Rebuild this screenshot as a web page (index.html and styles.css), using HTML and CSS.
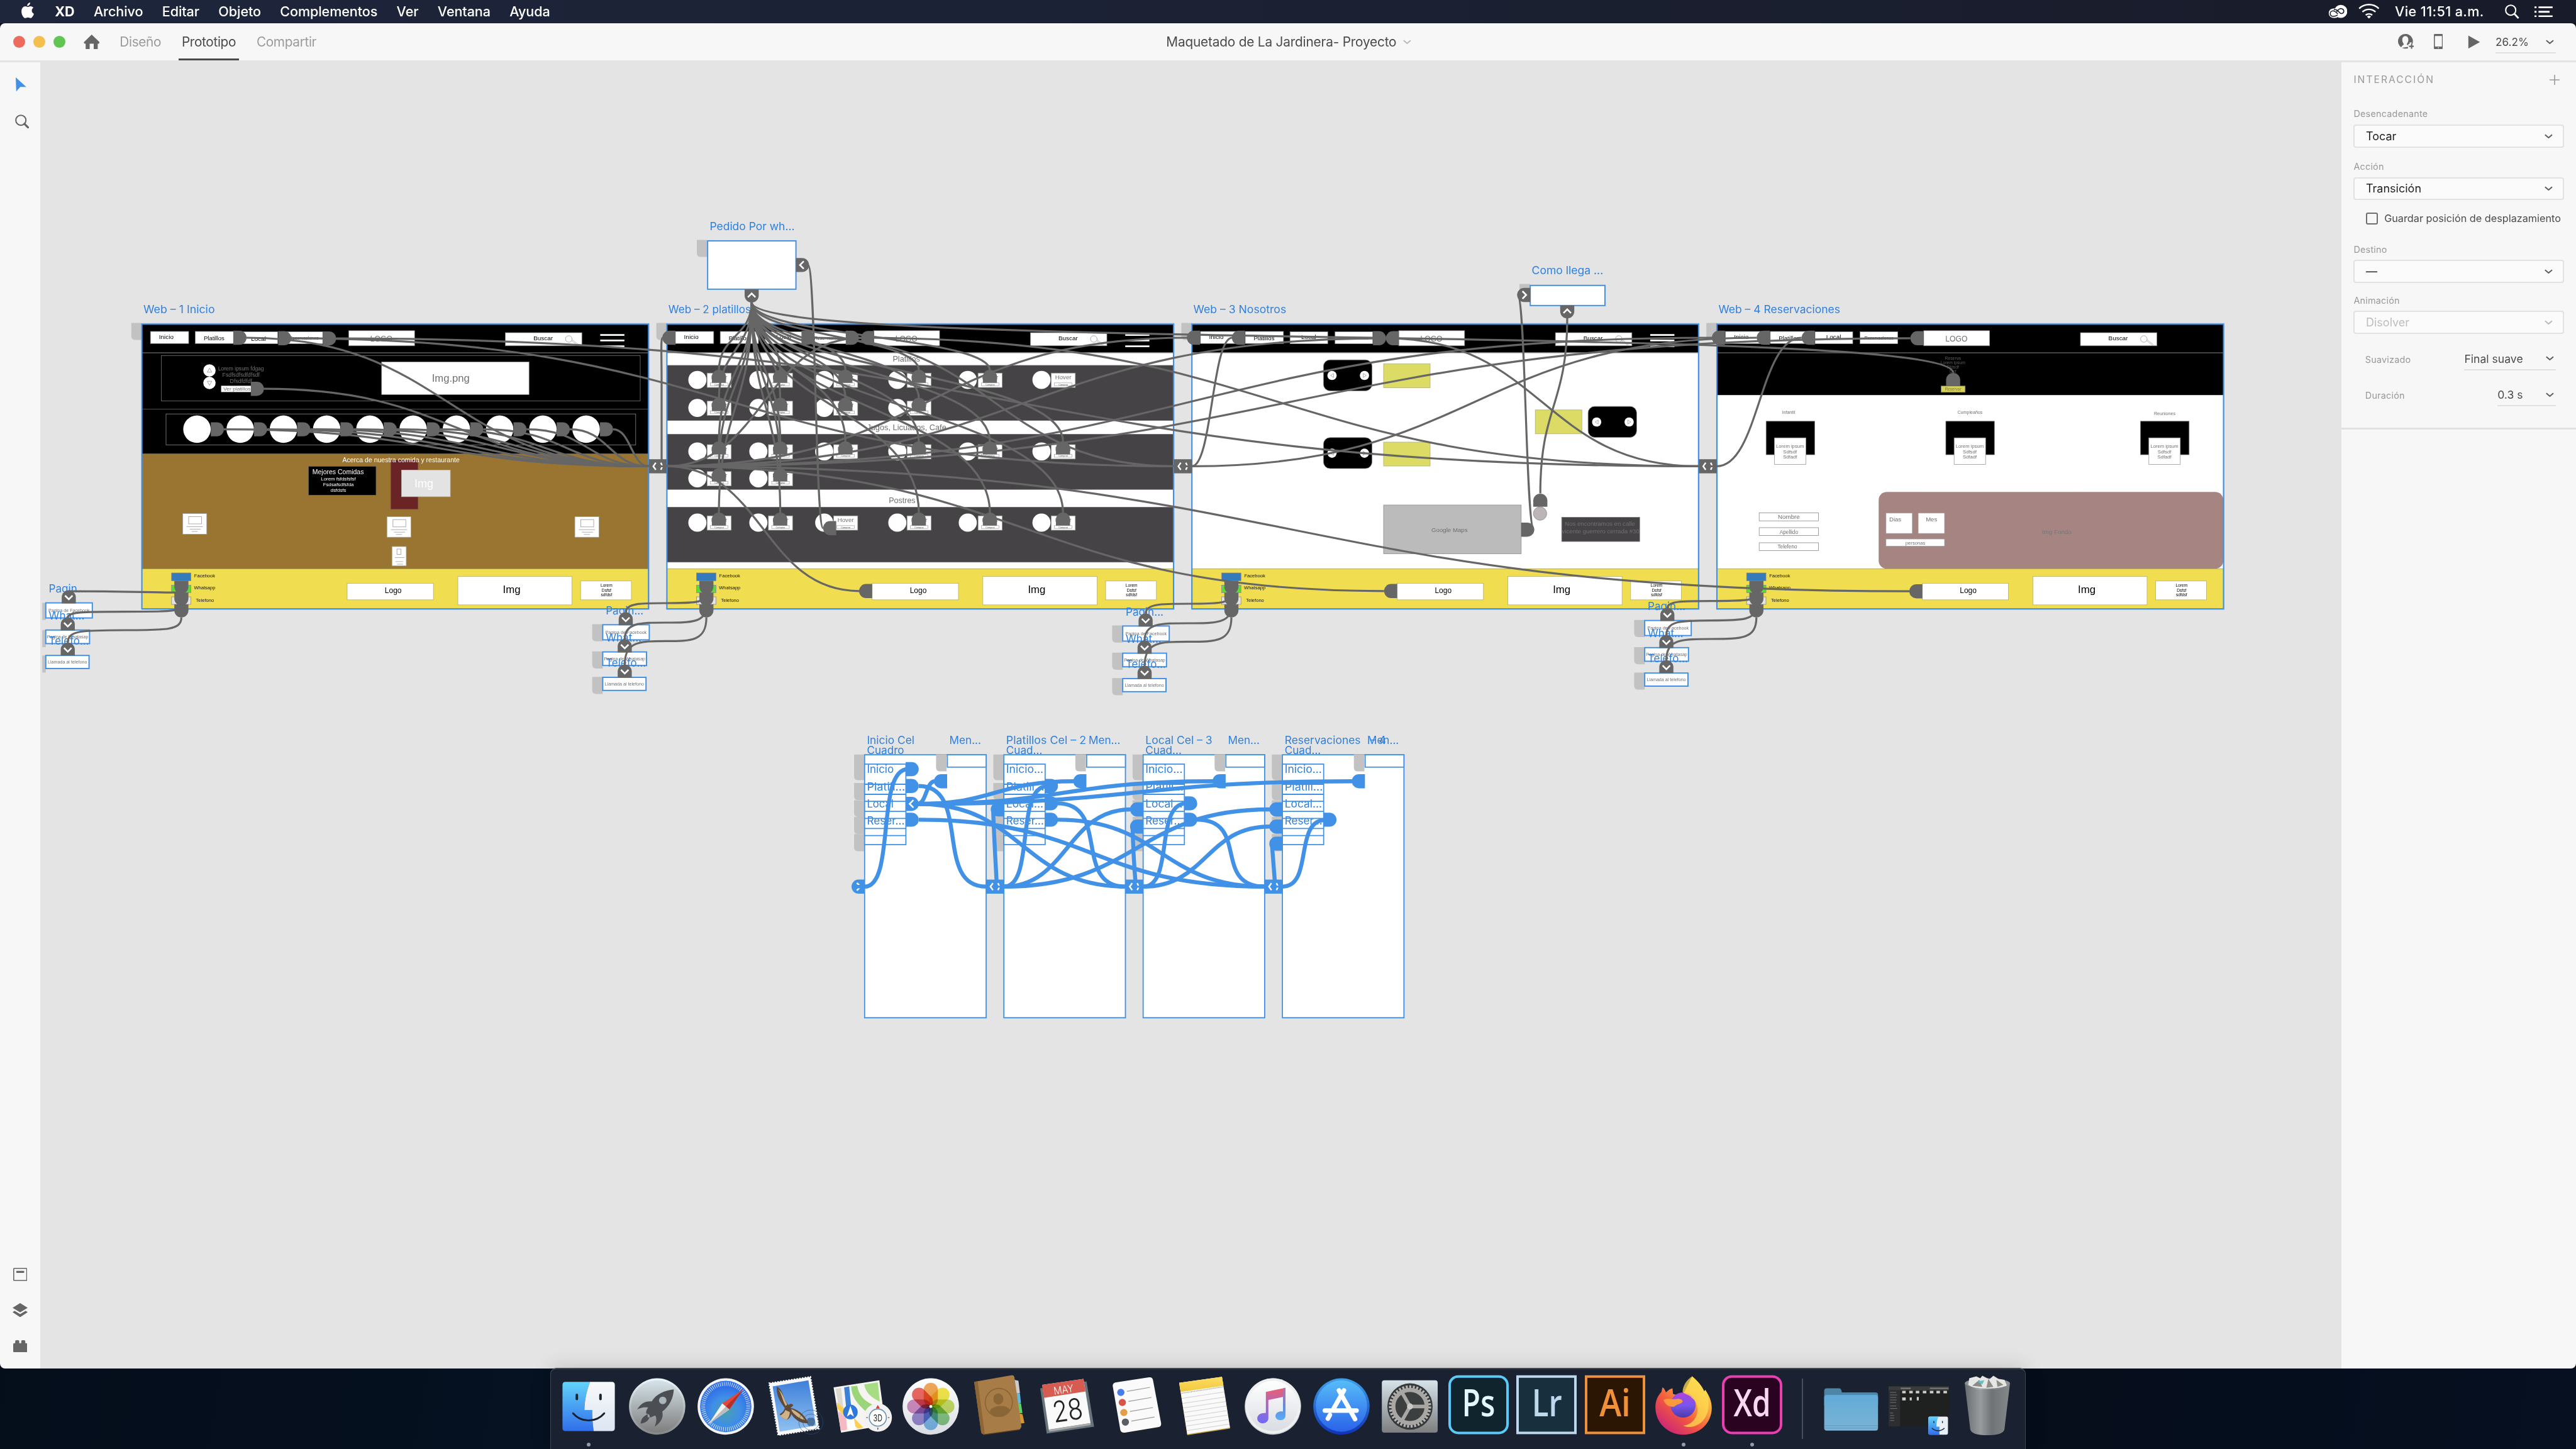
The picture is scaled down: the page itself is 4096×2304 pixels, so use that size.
FILE: index.html
```html
<!DOCTYPE html>
<html lang="es">
<head>
<meta charset="utf-8">
<title>Maquetado de La Jardinera- Proyecto</title>
<link rel="stylesheet" href="styles.css">
</head>
<body>
<header class="menubar">
  <svg class="apple" viewBox="0 0 25 32"><path d="M17.4 0c.3 3.400-2.600 7-5.900 7C11.200 3.800 14.200.5 17.400 0zM12.700 8.900c1.400 0 3-1.500 5.600-1.500 2.300 0 4.400 1.200 5.700 3-5 3-4 9.900.9 12C23.700 26.300 20.800 31 18.200 31c-2 0-2.700-1.200-5.200-1.200S9.700 31 7.900 31C4.400 31 .2 24.300.2 17.700.2 11.200 4.200 7.600 8 7.600c2 0 3.700 1.300 4.700 1.300z"/></svg>
  <nav class="menus"><b>XD</b><span>Archivo</span><span>Editar</span><span>Objeto</span><span>Complementos</span><span>Ver</span><span>Ventana</span><span>Ayuda</span></nav>
  <div class="status">
    <svg class="cc" viewBox="0 0 38 28"><rect x="1" y="8" width="22" height="19" rx="9.500" fill="#fff"/><circle cx="25" cy="14" r="13" fill="#fff"/><g fill="none" stroke="#1a1e2d" stroke-width="2" stroke-linecap="round"><path d="M18 21.500c-3 2-6 2.500-8.500 2.300a5.500 5.500 0 0 1 0-11c3 0 5 1.500 9 5.500"/><path d="M12 10.500c4-1 7 2 11 6 3 3 8 1.500 8-3s-6-7-10-3.500l-4 4"/></g></svg>
    <svg class="wifi" viewBox="0 0 42 30"><g fill="none" stroke="#fff" stroke-width="3"><path d="M1.500 9.500a28 28 0 0 1 39 0M8 16.200a19 19 0 0 1 26 0M14.500 22.500a10 10 0 0 1 13 0"/></g><path d="M17 25.500a6 6 0 0 1 8 0L21 29.500z" fill="#fff"/></svg>
    <span class="clock">Vie 11:51 a.m.</span>
    <svg class="spot" viewBox="0 0 28 29"><circle cx="11.500" cy="11.500" r="10" fill="none" stroke="#fff" stroke-width="2.600"/><path d="M18.500 18.500l8.500 9" stroke="#fff" stroke-width="3.400"/></svg>
    <svg class="list" viewBox="0 0 36 22"><path d="M0 2h4M0 11h4M0 20h4M8 2h28M8 11h22M8 20h28" stroke="#fff" stroke-width="3.600"/></svg>
  </div>
</header>

<main class="window">
  <div class="titlebar">
    <div class="lights"><i class="red"></i><i class="amber"></i><i class="green"></i></div>
    <svg class="home" viewBox="0 0 32 29"><path d="M16 0l16 15.500-2 2.500h-2v11h-8V18h-8v11H4V18H2l-2-2.500z" fill="#666"/></svg>
    <nav class="tabs"><span>Diseño</span><span class="on">Prototipo</span><span>Compartir</span></nav>
    <div class="doc"><span>Maquetado de La Jardinera- Proyecto</span><svg class="chev" viewBox="0 0 16 9"><path d="M1 1.500l7 6 7-6"/></svg></div>
    <div class="actions">
      <svg class="share" viewBox="0 0 32 30"><path d="M14.500 0a14.500 14.500 0 0 0-8 26.600c1-3.600 4-4.600 5-5.600 0-2-3-4-3-9.500C8.500 7 11 4.500 14.500 4.500s6 2.500 6 7c0 5.500-3 7-3 9.500 1 .6 2 1 3 2v-3h2.500v-3h4v3h1.500A14.500 14.500 0 0 0 14.500 0zM8 27.400c3 2 9 2.300 12 .6l-.5-2.500z" fill="#666"/><path d="M27 19.500v10M22 24.500h10" stroke="#666" stroke-width="2.600"/></svg>
      <svg class="device" viewBox="0 0 18 30"><path fill-rule="evenodd" d="M2 0h14a2 2 0 0 1 2 2v26a2 2 0 0 1-2 2H2a2 2 0 0 1-2-2V2a2 2 0 0 1 2-2zM2 4v21h14V4zM8 26.500v1.600h2v-1.600z" fill="#666"/></svg>
      <svg class="play" viewBox="0 0 24 27"><path d="M1 .5l23 13-23 13z" fill="#666"/></svg>
      <div class="zoom"><span>26.2%</span><svg class="chev dark" viewBox="0 0 16 9"><path d="M1 1.500l7 6 7-6"/></svg></div>
    </div>
  </div>

  <div class="body">
    <aside class="tools">
      <svg class="cursor" viewBox="0 0 21 28"><path d="M0 0l21 19H9L1 28z" fill="#4191e6"/></svg>
      <svg class="lens" viewBox="0 0 28 28"><circle cx="11.500" cy="11.500" r="10" fill="none" stroke="#666" stroke-width="2.600"/><path d="M18.500 18.500l7.500 7.500" stroke="#666" stroke-width="4" stroke-linecap="round"/></svg>
      <span class="push"></span>
      <svg class="boards" viewBox="0 0 28 26"><rect x="1" y="1" width="26" height="24" rx="1" fill="none" stroke="#666" stroke-width="2"/><rect x="6" y="6" width="16" height="4" rx="1.500" fill="#666"/></svg>
      <svg class="layers" viewBox="0 0 30 28"><path d="M15 0l15 9.300-15 9.300L0 9.300zM0 18l4-2.700 11 6.700 11-6.700 4 2.700-15 10z" fill="#666"/></svg>
      <svg class="plugins" viewBox="0 0 28 24"><path d="M4 6V2q0-2 2-2h4q2 0 2 2v4h4V2q0-2 2-2h4q2 0 2 2v4h2q2 0 2 2v14q0 2-2 2H2q-2 0-2-2V8q0-2 2-2z" fill="#666"/></svg>
    </aside>

    <svg class="canvas" id="canvas" viewBox="80 124 4574 2596" preserveAspectRatio="xMinYMin meet"></svg>

    <aside class="panel">
      <div class="head"><span>INTERACCIÓN</span><svg viewBox="0 0 20 20"><path d="M10 0v20M0 10h20" stroke="#999" stroke-width="2"/></svg></div>
      <label class="l1">Desencadenante</label>
      <div class="select"><span>Tocar</span><svg class="chev dark" viewBox="0 0 16 9"><path d="M1 1.500l7 6 7-6"/></svg></div>
      <label class="l2">Acción</label>
      <div class="select"><span>Transición</span><svg class="chev dark" viewBox="0 0 16 9"><path d="M1 1.500l7 6 7-6"/></svg></div>
      <div class="check"><i></i><span>Guardar posición de desplazamiento</span></div>
      <label class="l3">Destino</label>
      <div class="select"><span>—</span><svg class="chev dark" viewBox="0 0 16 9"><path d="M1 1.500l7 6 7-6"/></svg></div>
      <label class="l4">Animación</label>
      <div class="select off"><span>Disolver</span><svg class="chev" viewBox="0 0 16 9"><path d="M1 1.500l7 6 7-6"/></svg></div>
      <div class="row r1"><em>Suavizado</em><div class="pick wide"><span>Final suave</span><svg class="chev dark" viewBox="0 0 16 9"><path d="M1 1.500l7 6 7-6"/></svg></div></div>
      <div class="row r2"><em>Duración</em><div class="pick"><span>0.3 s</span><svg class="chev dark" viewBox="0 0 16 9"><path d="M1 1.500l7 6 7-6"/></svg></div></div>
      <div class="rule"></div>
    </aside>
  </div>
</main>

<footer class="dock">
  <svg width="0" height="0" class="defs">
    <defs>
      <linearGradient id="fblue" x2="0" y2="1"><stop offset="0" stop-color="#62d3fb"/><stop offset="1" stop-color="#306eea"/></linearGradient>
      <linearGradient id="fwhite" x2="0" y2="1"><stop offset="0" stop-color="#f8f9fa"/><stop offset="1" stop-color="#dce6f2"/></linearGradient>
      <linearGradient id="steel" x2="0" y2="1"><stop offset="0" stop-color="#d5e3e9"/><stop offset="1" stop-color="#7e7e7e"/></linearGradient>
      <linearGradient id="steelrim" x2="0" y2="1"><stop offset="0" stop-color="#eaf8fd"/><stop offset="1" stop-color="#858789"/></linearGradient>
      <radialGradient id="saf" cy=".6"><stop offset="0" stop-color="#4b9fae"/><stop offset=".55" stop-color="#3f8fe6"/><stop offset="1" stop-color="#2f6ee8"/></radialGradient>
      <linearGradient id="sky" x2="0" y2="1"><stop offset="0" stop-color="#3f7fda"/><stop offset="1" stop-color="#8fc1f1"/></linearGradient>
      <linearGradient id="disc" x2="0" y2="1"><stop offset="0" stop-color="#fff"/><stop offset="1" stop-color="#d9dce2"/></linearGradient>
      <linearGradient id="note" x2="0" y2="1"><stop offset="0" stop-color="#ed5f6c"/><stop offset=".5" stop-color="#a766c9"/><stop offset="1" stop-color="#6d6cf5"/></linearGradient>
      <linearGradient id="note2" x2="0" y2="1"><stop offset="0" stop-color="#c96a9d"/><stop offset=".6" stop-color="#5f8fe0"/><stop offset="1" stop-color="#58aef5"/></linearGradient>
      <linearGradient id="store" x2="0" y2="1"><stop offset="0" stop-color="#57bcf8"/><stop offset="1" stop-color="#2a63ea"/></linearGradient>
      <linearGradient id="storerim" x2="0" y2="1"><stop offset="0" stop-color="#3f9fe8"/><stop offset="1" stop-color="#0f34b8"/></linearGradient>
      <linearGradient id="fox" x1="1" y1="0" x2=".2" y2="1"><stop offset="0" stop-color="#fff36b"/><stop offset=".35" stop-color="#fbb03f"/><stop offset=".65" stop-color="#f2583f"/><stop offset="1" stop-color="#c9207c"/></linearGradient>
      <linearGradient id="globe" x2="0" y2="1"><stop offset="0" stop-color="#b043dc"/><stop offset=".5" stop-color="#7a55ee"/><stop offset="1" stop-color="#4a3ca8"/></linearGradient>
      <linearGradient id="fold" x2="0" y2="1"><stop offset="0" stop-color="#62abd8"/><stop offset="1" stop-color="#7ab3d5"/></linearGradient>
      <linearGradient id="bin"><stop offset="0" stop-color="#6d7174"/><stop offset=".35" stop-color="#a0a3a5"/><stop offset=".6" stop-color="#74787a"/><stop offset="1" stop-color="#8b8f91"/></linearGradient>
      <linearGradient id="yel" x2="0" y2="1"><stop offset="0" stop-color="#fbdc62"/><stop offset="1" stop-color="#f3c83c"/></linearGradient>
    </defs>
  </svg>

  <div class="app run"><svg viewBox="0 0 120 120"><path d="M14 14h48.500C55 35 52 52 51.600 70H67c0 14 1 28 3 42H14q-6 0-6-6V20q0-6 6-6z" fill="url(#fblue)"/><path d="M62.500 14H106q6 0 6 6v86q0 6-6 6H70c-2-14-3-28-3-42H51.600C52 52 55 35 62.500 14z" fill="url(#fwhite)"/><path d="M36.500 40v8M83.500 40v8" stroke="#16242f" stroke-width="5" stroke-linecap="round"/><path d="M29 76.500c16 19 46 19 62 0" fill="none" stroke="#1a2029" stroke-width="3.600" stroke-linecap="round"/></svg></div>
  <div class="app"><svg viewBox="0 0 120 120"><circle cx="60" cy="63" r="56" fill="url(#steelrim)"/><circle cx="60" cy="63" r="52" fill="url(#steel)"/><path d="M93 29C75 31 58 38 49 53c-14-1-22 5-29 16 8-4 14-5 22-4-4 5-4 9-4 12l6 2 2 6 10-4c4 6 2 14-1 22 12-8 18-18 15-30 14-10 22-26 23-44z" fill="#4b4f53"/><circle cx="71" cy="51" r="7.500" fill="#a9b5bb"/><path d="M41 78c-9 5-13 9-14 19 9-1 15-5 18-13l-4 1z" fill="#4b4f53"/></svg></div>
  <div class="app"><svg viewBox="0 0 120 120"><circle cx="60" cy="63" r="56" fill="#f1f3f5"/><circle cx="60" cy="63" r="51" fill="url(#saf)"/><circle cx="60" cy="63" r="45" fill="none" stroke="#dcecfb" stroke-width="8" stroke-dasharray="1.200 2.727"/><path d="M94.700 28.700L53 57l14 12z" fill="#e3483e"/><path d="M94.700 28.700L60 63l7 6z" fill="#b82f28"/><path d="M25.800 98L53 57l14 12z" fill="#f4f4f4"/><path d="M25.800 98L60 63l7 6z" fill="#bcbcbc"/></svg></div>
  <div class="app"><svg viewBox="0 0 120 120"><path d="M10 17L92 4l17 103-81 13z" fill="#f7f7f7" stroke="#f7f7f7" stroke-width="3" stroke-dasharray="3 2.500"/><path d="M17 23l71-12 15 90-72 12z" fill="url(#sky)"/><path d="M25 24c6 0 11 10 14 20 3 8 6 13 10 16 2-3 6-3 9 0-2 3-4 5-6 6 14 2 28 12 36 30-14 2-26-6-34-18-1 5-4 9-8 11-7-1-12-5-15-11 6-3 9-7 10-12C32 54 24 42 25 24z" fill="#5f4a38"/><path d="M28 29c7 8 8 22 15 33l3-3C40 50 38 36 28 29zM54 68c9 4 19 10 27 22-10-2-20-9-26-18zM42 70c-2 6-6 9-10 11 3 4 7 7 13 8 4-4 6-9 6-15z" fill="#cfb28a"/><g fill="none" stroke="#33527c" opacity=".75"><circle cx="93" cy="94" r="24"/><circle cx="93" cy="94" r="16"/></g><path d="M93 86c4-2 8 1 8 7s-4 11-8 8c-4 3-8-2-8-8s4-9 8-7z" fill="#33527c" opacity=".7"/></svg></div>
  <div class="app"><svg viewBox="0 0 120 120"><path d="M3 25L94 11l12 89-88 15z" fill="#f5f4f0"/><path d="M7 28l11-2 9 84-5 1z" fill="#dcdad0"/><path d="M38 23l12-1c3 18 14 30 28 36l22 12 2 25-14 2C76 72 40 62 38 23z" fill="#9ad57a"/><path d="M64 19l27-4 4 38C78 46 66 34 64 19z" fill="#a6dc84"/><path d="M10 55l22 18 30 32-11 2-41-40z" fill="#fccf52"/><path d="M12 72l16 14 2 23-13 2z" fill="#f4b9c3"/><path d="M24 25l10-2 6 60-10 1z" fill="#3c82d8"/><path d="M31 84l12-1 4 24-14 3z" fill="#fff"/><circle cx="36.500" cy="74" r="14.500" fill="#2e78dc"/><path d="M36.500 62l7 21-7-5-7 5z" fill="#fff"/><circle cx="91" cy="85" r="28" fill="#f2f2f2"/><circle cx="91" cy="85" r="17" fill="#fff" stroke="#6f93ad" stroke-width="2"/><text x="91" y="92" class="t3d" textLength="18" lengthAdjust="spacingAndGlyphs">3D</text><path d="M91 60l4 7h-8z" fill="#e0392f"/><path d="M68 85h3M111 85h3M91 105v4" stroke="#333" stroke-width="1.500"/></svg></div>
  <div class="app"><svg viewBox="0 0 120 120"><circle cx="60" cy="63" r="56" fill="url(#disc)"/><g class="petals"><rect x="46" y="16" width="28" height="47" rx="14" fill="#f2a14a"/><rect x="46" y="16" width="28" height="47" rx="14" fill="#f3e53c" transform="rotate(45 60 63)"/><rect x="46" y="16" width="28" height="47" rx="14" fill="#c3dc5a" transform="rotate(90 60 63)"/><rect x="46" y="16" width="28" height="47" rx="14" fill="#7fc57c" transform="rotate(135 60 63)"/><rect x="46" y="16" width="28" height="47" rx="14" fill="#76b8ec" transform="rotate(180 60 63)"/><rect x="46" y="16" width="28" height="47" rx="14" fill="#9583cf" transform="rotate(225 60 63)"/><rect x="46" y="16" width="28" height="47" rx="14" fill="#cf87bd" transform="rotate(270 60 63)"/><rect x="46" y="16" width="28" height="47" rx="14" fill="#ee5d55" transform="rotate(315 60 63)"/></g><circle cx="60" cy="63" r="3" fill="#fff"/></svg></div>
  <div class="app"><svg viewBox="0 0 120 120"><path d="M90 10l8 2 3 24-8 2z" fill="#ccc"/><path d="M94 36l7 1 2 19-7 1z" fill="#63b9e0"/><path d="M96 56l7 1 3 19-8 1z" fill="#62cf68"/><path d="M99 77l7 1 4 18-8 1z" fill="#d8962f"/><path d="M28 120l72-10 4-8-4-4-72 14z" fill="#5d3d1d"/><path d="M10 14L84 1q5-1 6 4l14 98-3 5-72 10q-4 0-5-4z" fill="#a87c46"/><path d="M10 14l7-1 14 104-3 1-4-3z" fill="#8e6636"/><ellipse cx="59" cy="55" rx="27" ry="28" fill="none" stroke="#8a6535" stroke-width="2"/><ellipse cx="58" cy="48" rx="10" ry="11" fill="#8a6535"/><path d="M41 73c2-12 32-16 40-4-8 17-32 18-40 4z" fill="#8a6535"/></svg></div>
  <div class="app"><svg viewBox="0 0 120 120"><path d="M5 27l92-14 15 90-94 14z" fill="#68757d"/><path d="M9 20L91 8l14 88-83 13z" fill="#fafafa"/><path d="M9 20L91 8l4 25-83 13z" fill="#d65b50"/><path d="M22 109l83-13v4l-82 13z" fill="#aaa"/><g transform="rotate(-8.500 60 60)"><text x="56" y="36" class="may" textLength="40" lengthAdjust="spacingAndGlyphs">MAY</text><text x="58" y="91" class="d28" textLength="60" lengthAdjust="spacingAndGlyphs">28</text></g></svg></div>
  <div class="app"><svg viewBox="0 0 120 120"><path d="M28 118l80-14 3-6-82 12z" fill="#222"/><path d="M20 15l65-10q7-1 8 6l16 85q1 7-6 8l-66 11q-7 1-9-5L13 23q-1-7 7-8z" fill="#fafafa"/><g stroke="#fff" stroke-width="1.500"><circle cx="29" cy="35" r="8" fill="#477de8"/><circle cx="32" cy="55" r="8" fill="#d65546"/><circle cx="35" cy="75" r="8" fill="#e49e48"/><circle cx="38" cy="94" r="8" fill="#5a5f66"/></g><path d="M41 33l46-8M44 53l46-8M47 73l46-8M50 92l46-8" stroke="#999" stroke-width="1.500"/></svg></div>
  <div class="app"><svg viewBox="0 0 120 120"><path d="M10 16L95 4l16 103-85 13z" fill="#c8a53a"/><path d="M10 16L95 4l16 101-85 13z" fill="#fafafa"/><path d="M10 16L95 4l3 18-85 12z" fill="url(#yel)"/><path d="M13 37l85-13" stroke="#888" stroke-width="1.500" stroke-dasharray="1.500 1.500"/><path d="M15 47l85-13M17 57l85-13M18 66l85-13M19 75l85-13M21 84l85-13M22 93l85-13M23 102l85-13M25 111l85-13" stroke="#c4c4c4"/></svg></div>
  <div class="app"><svg viewBox="0 0 120 120"><circle cx="60" cy="63" r="56" fill="#c9ccd0"/><circle cx="60" cy="62" r="55" fill="#eef0f0"/><circle cx="60" cy="62" r="50" fill="url(#disc)"/><path d="M46 34l39-8v17l-34 7v36c0 13-20 14-22 2-1-8 7-13 17-12z" fill="url(#note)"/><path d="M80 27l5-1v55c0 12-18 12-20 2 0-7 6-11 15-10z" fill="url(#note2)"/></svg></div>
  <div class="app"><svg viewBox="0 0 120 120"><circle cx="60" cy="63" r="56" fill="url(#storerim)"/><circle cx="60" cy="62" r="51" fill="url(#store)"/><g stroke="#fff" stroke-width="9" stroke-linecap="round"><path d="M65 31L44 68M55 31l32 57M27 71h63M37 80l-4 7"/></g></svg></div>
  <div class="app"><svg viewBox="0 0 120 120"><rect x="4" y="11" width="111" height="104" rx="5" fill="url(#steel)"/><ellipse cx="60" cy="63" rx="45" ry="46" fill="#35393b"/><circle cx="60" cy="63" r="39" fill="none" stroke="#b5b3af" stroke-width="6" stroke-dasharray="4 3"/><circle cx="60" cy="63" r="33" fill="#3c3f40" stroke="#a9a7a3" stroke-width="8"/><path d="M60 63h32M60 63L44 35M60 63L44 91" stroke="#a9a7a3" stroke-width="7"/><circle cx="60" cy="63" r="6" fill="#c9c9c9"/></svg></div>
  <div class="app"><svg viewBox="0 0 120 120"><rect x="2.500" y="3.500" width="115" height="112" rx="17" fill="#10242e" stroke="#5bcaf9" stroke-width="5"/><text x="60" y="83" class="logo" fill="#e4f6fe" textLength="66" lengthAdjust="spacingAndGlyphs">Ps</text></svg></div>
  <div class="app"><svg viewBox="0 0 120 120"><rect x="2.500" y="3.500" width="115" height="112" fill="#18303e" stroke="#bdd8ec" stroke-width="5"/><text x="61" y="83" class="logo" fill="#bdd8ec" textLength="60" lengthAdjust="spacingAndGlyphs">Lr</text></svg></div>
  <div class="app"><svg viewBox="0 0 120 120"><rect x="2.500" y="3.500" width="115" height="112" fill="#2b1604" stroke="#f0913a" stroke-width="5"/><text x="60" y="83" class="logo" fill="#f0913a" textLength="62" lengthAdjust="spacingAndGlyphs">Ai</text></svg></div>
  <div class="app run"><svg viewBox="0 0 120 120"><path d="M77 3c12 10 20 20 24 30l2-3c8 11 13 23 13 36 0 31-25 53-56 53S4 96 4 64c0-14 6-24 12-30l2-9c3 1 5 5 7 10 4-4 8-7 13-8l1 11 18 5z" fill="url(#fox)"/><circle cx="59" cy="60" r="25" fill="url(#globe)"/><path d="M77 3c12 10 20 20 24 30l2-3c8 11 10 40 0 55-8 14-28 24-44 16 20-2 32-20 28-38-1-8-6-14-12-18 2-3-18-8-17-12 1-12 8-23 19-30z" fill="#fddc50" opacity=".75"/><path d="M20 50c6-5 18 0 26-2 8-1 13 2 12 6-5 5-12 4-16 9-10 2-18-3-22-13z" fill="#fb9a3d"/></svg></div>
  <div class="app run"><svg viewBox="0 0 120 120"><rect x="2.500" y="3.500" width="115" height="112" rx="17" fill="#2a0320" stroke="#e93fb1" stroke-width="5"/><text x="60" y="83" class="logo" fill="#f7d8f0" textLength="74" lengthAdjust="spacingAndGlyphs">Xd</text></svg></div>
  <i class="sep"></i>
  <div class="app"><svg viewBox="0 0 120 120"><path d="M7 32q0-5 5-5h25q4 0 5 8h67q5 0 5 5v20H7z" fill="#4f86a8"/><path d="M7 45q0-5 5-5h97q5 0 5 5v61q0 5-5 5H12q-5 0-5-5z" fill="url(#fold)"/><path d="M7 101h107M7 106h107" stroke="#5b94b8"/></svg></div>
  <div class="app"><svg viewBox="0 0 120 120"><rect y="23" width="120" height="80" fill="#1f2121"/><rect y="23" width="120" height="8" fill="#3a3c3c"/><rect y="31" width="23" height="72" fill="#2c2e2f"/><path d="M3 35h12M3 40h14M3 45h12M3 50h13M3 55h12M3 62h12M3 67h14M3 76h6M3 81h8M3 86h8M3 91h8" stroke="#84888a"/><g fill="#d0cdc8"><path d="M27 32h7v5h-7zM41 32h7v5h-7zM54 32h7v5h-7zM68 32h7v5h-7zM82 32h7v5h-7zM95 32h7v5h-7zM109 32h7v5h-7zM27 45h7v6h-7zM42 45h4v6h-4zM56 44h4v7h-4z"/></g><path d="M24 27h20M82 27h37" stroke="#777" stroke-width="3"/><rect x="79" y="83" width="39" height="36" rx="3" fill="#e9eff6"/><path d="M82 83h17c-3 7-4 13-4 20h6v16H82q-3 0-3-3V86q0-3 3-3z" fill="url(#fblue)"/><path d="M90 92v4M107 92v4M86 106c7 7 18 7 25 0" fill="none" stroke="#1c2733" stroke-width="1.800"/></svg></div>
  <div class="app"><svg viewBox="0 0 120 120"><ellipse cx="60" cy="17" rx="45" ry="10" fill="#8f9294"/><path d="M22 20l2-13 14-4 8 4 4-5 14 7 8-7 10 6 12 2 5 12-20 8H40z" fill="#e6e6e4"/><path d="M30 22l14-12 6 14zM62 8l10 16-14 2zM78 10l14 10-12 4z" fill="#8c8c88"/><path d="M40 13l14-2-4 8z" fill="#5fc1c9"/><path d="M15 17c10 14 80 14 90 0L94 108q-2 12-34 12t-34-12z" fill="url(#bin)" opacity=".95"/></svg></div>
</footer>
<script src="canvas.js"></script>
</body>
</html>
```
FILE: styles.css
```css
html { font-size: 8px; }
* { box-sizing: border-box; }
body {
  margin: 0;
  width: 512rem;
  height: 288rem;
  overflow: hidden;
  display: flex;
  flex-direction: column;
  background: linear-gradient(100deg, #040b17, #061222 30%, #040a16 60%, #061020);
  font-family: Inter, "Liberation Sans", sans-serif;
}
svg { display: block; flex: none; }

.menubar {
  height: 4.6rem;
  flex: none;
  display: flex;
  align-items: center;
  padding-left: 4.2rem;
  background: linear-gradient(90deg, #1e263c, #181b29);
  color: #fff;
  font-size: 2.7rem;
  font-weight: 500;
}
.apple { width: 2.5rem; height: 3.2rem; margin-top: -.4rem; fill: #fff; }
.menus { display: flex; gap: 3.8rem; margin-left: 4.2rem; letter-spacing: -.005em; }
.menus b { font-weight: 700; }
.status { display: flex; align-items: center; margin-left: auto; padding-right: 4.6rem; }
.cc { width: 3.8rem; height: 2.8rem; margin-right: 2.2rem; }
.wifi { width: 4.2rem; height: 3rem; margin-right: 3.1rem; }
.clock { white-space: nowrap; width: 17.4rem; letter-spacing: .018em; }
.spot { width: 2.8rem; height: 2.9rem; margin: 0 3.1rem 0 4.5rem; }
.list { width: 3.6rem; height: 2.2rem; }

.window {
  height: 267.4rem;
  flex: none;
  display: flex;
  flex-direction: column;
  background: #f7f7f7;
  border-radius: 1rem;
  overflow: hidden;
}
.titlebar {
  height: 7.8rem;
  flex: none;
  display: flex;
  align-items: center;
  padding-left: 2.6rem;
  border-bottom: .4rem solid #e4e4e4;
  color: #9b9b9b;
  font-size: 2.6rem;
}
.lights { display: flex; gap: 1.6rem; }
.lights i { width: 2.4rem; height: 2.4rem; border-radius: 50%; }
.red { background: #ed6a5e; }
.amber { background: #f5bf4f; }
.green { background: #61c554; }
.home { width: 3.2rem; height: 2.9rem; margin: 0 4rem 0 3.6rem; }
.tabs { display: flex; flex: none; width: 208rem; height: 7.4rem; line-height: 7.4rem; letter-spacing: -.017em; }
.tabs span { margin-right: 3.5rem; }
.tabs .on { color: #4b4b4b; padding: 0 .6rem; border-bottom: .4rem solid #4b4b4b; }
.doc { display: flex; align-items: center; gap: 1.3rem; color: #4b4b4b; white-space: nowrap; letter-spacing: -.009em; }
.actions { display: flex; align-items: center; margin-left: auto; padding-right: 4rem; }
.share { width: 3.2rem; height: 3rem; margin-right: 3.9rem; }
.device { width: 1.8rem; height: 3rem; margin-right: 5rem; }
.play { width: 2.4rem; height: 2.7rem; margin-right: 3.1rem; }
.zoom {
  display: flex; align-items: center; justify-content: space-between;
  width: 12rem; height: 4.4rem; margin-top: .2rem;
  padding-right: .4rem;
  border-bottom: 2px solid #e1e1e1;
  color: #4b4b4b; font-size: 2.15rem;
}
.chev { width: 1.6rem; height: .9rem; fill: none; stroke: #b8b8b8; stroke-width: 2.4; }
.chev.dark { stroke: #5a5a5a; }

.body { display: flex; flex: 1; min-height: 0; }
.tools {
  width: 8rem;
  flex: none;
  display: flex;
  flex-direction: column;
  padding: 3rem 0 3.2rem;
}
.cursor { width: 2.1rem; height: 2.8rem; margin-left: 3.1rem; }
.lens { width: 2.8rem; height: 2.8rem; margin: 4.5rem 0 0 3rem; }
.push { flex: 1; }
.boards { width: 2.8rem; height: 2.6rem; margin-left: 2.6rem; }
.layers { width: 3rem; height: 2.8rem; margin: 4.4rem 0 4.6rem 2.5rem; }
.plugins { width: 2.8rem; height: 2.4rem; margin-left: 2.6rem; }

.canvas { flex: 1; min-width: 0; height: 100%; background: #e4e4e4; font-family: "Liberation Sans", sans-serif; }
.canvas .name { font-family: Inter, "Liberation Sans", sans-serif; fill: #2f80dd; font-size: 21px; }

.panel { width: 46.6rem; flex: none; padding-left: 2.4rem; display: flex; flex-direction: column; color: #999; }
.head { display: flex; justify-content: space-between; align-items: center; padding: 2.4rem 3.2rem 0 0; height: 4.4rem; font-size: 1.95rem; letter-spacing: .13em; }
.head svg { width: 2rem; height: 2rem; margin-top: .2rem; }
.panel label { font-size: 1.8rem; line-height: 2.2rem; height: 2.2rem; letter-spacing: .015em; }
.l1 { margin: 4.75rem 0 1.05rem; }
.l2 { margin: 2.6rem 0 1rem; }
.l3 { margin: 3.85rem 0 .95rem; }
.l4 { margin: 2.45rem 0 .95rem; }
.select {
  display: flex; align-items: center; justify-content: space-between;
  width: 41.8rem; height: 4.6rem;
  padding: 0 2rem 0 2.2rem;
  border: 2px solid #e2e2e2; border-radius: .5rem;
  background: #fbfbfb; color: #222; font-size: 2.25rem;
}
.select.off { color: #bdbdbd; }
.check { display: flex; align-items: center; gap: 1.3rem; margin: 2.4rem 0 0 2.4rem; color: #4b4b4b; font-size: 2.03rem; height: 2.4rem; white-space: nowrap; }
.check i { width: 2.4rem; height: 2.4rem; border: 2px solid #6e6e6e; border-radius: 3px; }
.row { display: flex; justify-content: space-between; align-items: center; padding: 0 4rem 0 2.3rem; }
.row em { font-style: normal; font-size: 1.8rem; letter-spacing: .015em; }
.r1 { margin-top: 2.8rem; }
.r2 { margin-top: 2.8rem; }
.pick { display: flex; align-items: center; justify-content: space-between; width: 11.6rem; height: 4.4rem; padding-right: .4rem; border-bottom: 2px solid #e1e1e1; color: #4b4b4b; font-size: 2.2rem; }
.pick.wide { width: 18.2rem; }
.rule { height: .4rem; background: #e1e1e1; margin: 4.2rem 0 0 -2.4rem; }

.dock {
  position: absolute;
  left: 109.4rem; top: 271.9rem;
  width: 293.2rem; height: 16.1rem;
  display: flex;
  gap: 1.6rem;
  padding: 1.1rem 1.5rem 0 1.5rem;
  background: #1a2130;
  border: solid #42474f;
  border-width: .3rem .2rem 0;
  border-radius: 1.2rem 1.2rem 0 0;
  box-shadow: 0 0 4rem rgba(0, 0, 0, .16);
}
.defs { position: absolute; }
.app { width: 12rem; flex: none; display: flex; flex-direction: column; align-items: center; }
.app svg { width: 12rem; height: 12rem; overflow: visible; }
.run::after { content: ""; width: .8rem; height: .8rem; margin-top: 1.5rem; border-radius: 50%; background: #929baa; }
.sep { width: .2rem; height: 12rem; margin: .7rem 1.9rem 0 2.3rem; background: #464c58; flex: none; }
.petals rect { mix-blend-mode: multiply; opacity: .92; }
.app text { text-anchor: middle; }
.logo { font: 600 74px "Open Sans", sans-serif; }
.may { font: 300 21px Inter, sans-serif; fill: #fff; }
.d28 { font: 300 58px Inter, sans-serif; fill: #222; }
.t3d { font: 400 18px Inter, sans-serif; fill: #222; }
```
FILE: canvas.js
```javascript
const GREY = '#666', BLUE = '#4192e7', LINE = '#8a8a8a';
const out = [];
const put = s => out.push(s);

const rect = (x, y, w, h, fill, stroke = 'none', rx = 0, sw = 1) =>
  put(`<rect x="${x}" y="${y}" width="${w}" height="${h}" fill="${fill}" stroke="${stroke}" stroke-width="${sw}" rx="${rx}"/>`);
const text = (x, y, s, size, fill = '#000', anchor = 'middle', len = 0) =>
  put(`<text x="${x}" y="${y}" font-size="${size}" fill="${fill}" text-anchor="${anchor}"${len ? ` textLength="${len}" lengthAdjust="spacingAndGlyphs"` : ''}>${s}</text>`);
const name = (x, y, s, len) =>
  put(`<text class="name" x="${x - 1.5}" y="${y + 1}" textLength="${len}" lengthAdjust="spacingAndGlyphs">${s}</text>`);
const circle = (x, y, r, fill = '#fff', stroke = 'none') =>
  put(`<circle cx="${x}" cy="${y}" r="${r}" fill="${fill}" stroke="${stroke}"/>`);
const path = (d, stroke = GREY, w = 4, fill = 'none') =>
  put(`<path d="${d}" fill="${fill}" stroke="${stroke}" stroke-width="${w}"/>`);
const tab = (x, y, h = 34, w = 21) =>
  put(`<path d="M${x} ${y}h${-w}v${h - 8}q0 8 8 8h${w - 8}z" fill="#c2c2c2"/>`);

/* connector handle; x,y is the middle of its flat side */
const TURN = { r: 0, d: 90, l: 180, u: 270 };
const CHEVRON = { '<': 180, '>': 0, '^': 270, 'v': 90 };
function handle(x, y, dir, color = GREY, mark) {
  put(`<path transform="translate(${x} ${y}) rotate(${TURN[dir]})" d="M0-14H12A14 14 0 0 1 12 14H0Z" fill="${color}"/>`);
  if (mark) {
    const a = TURN[dir] * Math.PI / 180;
    chevron(x + 12 * Math.cos(a), y + 12 * Math.sin(a), mark);
  }
}
const chevron = (x, y, mark) =>
  put(`<path transform="translate(${x} ${y}) rotate(${CHEVRON[mark]})" d="M-3.500-7.500L4 0L-3.500 7.500" fill="none" stroke="#fff" stroke-width="3.200"/>`);
function joint(x1, x2, y, color) {
  rect(x1, y - 14, x2 - x1, 28, color);
  const m = (x1 + x2) / 2;
  path(`M${m - 4} ${y - 7}l-5 7 5 7M${m + 6} ${y - 7}l3 7-3 7`, '#fff', 3);
  path(`M${m - 5} ${y}h24`, color, 4);
}
const hwire = (x0, y0, x1, y1, color, w) =>
  path(`M${x0} ${y0}C${(x0 + x1) / 2} ${y0} ${(x0 + x1) / 2} ${y1} ${x1} ${y1}`, color, w);
const vwire = (x0, y0, x1, y1) =>
  path(`M${x0} ${y0}C${x0} ${(y0 + y1) / 2} ${x1} ${(y0 + y1) / 2} ${x1} ${y1}`);
const elbow = (x0, y0, x1, y1) => {
  const mx = (x0 + x1) / 2, my = (y0 + y1) / 2;
  path(`M${x0} ${y0}C${x0} ${my} ${x0 - 30} ${my} ${mx} ${my}S${x1} ${my} ${x1} ${y1}`);
};

/* ---- web artboards ---- */
const TOP = 644.5, W = 1007, H = 566;
const BX = [282, 1325.5, 2369, 3412.5];

function header(burger, extraY = 0) {
  rect(0, 0, W, 56.500, '#000');
  rect(17, 14.500, 76, 24, '#fff', LINE); text(48.500, 29, 'Inicio', 12.400);
  rect(106, 14.500, 76, 24, '#fff', LINE); text(143.500, 32.500, 'Platillos', 12);
  rect(195, 15, 75, 24, '#fff', LINE); text(232, 30 + extraY, 'Local', 12.400);
  rect(284.500, 15, 75, 24, '#fff', LINE); text(322, 31, 'Reservaciones', 8.800);
  rect(411, 13, 131, 30, '#fff', LINE); text(476, 34.500, 'LOGO', 15.200, '#707070');
  rect(722.500, 17, 152, 26, '#fff', LINE); text(797.500, 32.500, 'Buscar', 12.400);
  path('M854 33L866 42M855 31L868 41', '#999', .8);
  circle(848.500, 29.500, 6.500, '#fff', '#999');
  if (burger) path('M911 21.500h48M911 32.500h48M911 44h48', '#fff', 3.500);
  path(`M0 57H${W}`, LINE, 1.500);
}
function footer() {
  rect(0, 486.500, W, 79, '#f0de50', '#a99c3f');
  rect(59, 494.500, 38.500, 15.500, '#357abb', LINE);
  rect(59, 519, 38.500, 14.700, '#5bdc33', LINE);
  rect(59, 542, 38.500, 15, '#e3e3e3', LINE);
  text(104, 503.500, 'Facebook', 9.500, '#111', 'start');
  text(103.500, 527.500, 'Whatsapp', 9.500, '#111', 'start');
  text(107.500, 551.500, 'Telefono', 9.500, '#111', 'start');
  rect(408, 515, 171.500, 33, '#fff', '#b8ae6a'); text(499.500, 534.500, 'Logo', 15);
  rect(628, 501.500, 227, 56.500, '#fff', '#b8ae6a'); text(735, 535, 'Img', 21);
  rect(872, 510.500, 101, 37.500, '#fff', '#b8ae6a');
  ['Lorem', 'Dsfsf', 'sdfdsf'].forEach((t, i) => text(923.500, 522.500 + i * 9, t, 8.300));
}
function board(i, draw) {
  put(`<g transform="translate(${BX[i]} ${TOP})">`);
  tab(0, -2.500);
  rect(0, -2.500, W + 2, H + 4, '#cfcfcf');
  rect(0, 0, W, H, '#fff');
  draw();
  footer();
  rect(0, 0, W, H, 'none', '#3f8fe4', 0, 2.600);
  put('</g>');
}

board(0, () => {
  rect(0, 0, W, 258, '#000');
  header(true, 3);
  rect(38.500, 62.500, 952, 90, 'none', '#777');
  circle(134.300, 92, 12.300); circle(134.300, 116.800, 12.300);
  path('M130 95.500h9l-4.500-8zM130 113.500h9l-4.500 8z', '#777', .8);
  text(197, 92, 'Lorem ipsum fdgag', 11, '#707070', 'middle', 91);
  text(197, 104.500, 'Fsdfsdfsdfdfsdf', 11, '#707070', 'middle', 74);
  text(197, 117, 'Dfsdfdfdf', 11, '#707070');
  rect(157.500, 122.500, 60, 12.500, '#fff'); text(162, 132.500, 'Ver platillos', 10, '#707070', 'start', 54);
  rect(476.500, 75, 293, 65, '#fff', LINE); text(614, 114.500, 'Img.png', 20.800, '#707070');
  path(`M0 169H${W}`, '#555', 1.200);
  rect(48, 178.500, 933.500, 61.500, 'none', '#8a8a8a');
  for (let i = 0; i < 10; i++) circle(109.500 + i * 85.940, 208.800, 27.300);
  rect(0, 258, W, 229, '#9a7531', '#777');
  rect(331, 282.500, 134.500, 57.500, '#000', '#6b6b6b');
  text(390, 298.500, 'Mejores Comidas', 13, '#fff', 'middle', 102);
  ['Lorem fsfdsfsfsf', 'Fsdsafsdfsfda', 'dsfdsfs'].forEach((t, i) => text(390.500, 311 + i * 11.400, t, 9.800, '#fff'));
  rect(494.500, 270, 54.500, 98, '#6b2426', '#7a5a3a');
  text(515, 274.500, 'Acerca de nuestra comida y restaurante', 12.700, '#fff', 'middle', 233);
  rect(516, 290, 97, 53, '#e3e3e3', '#bbb'); text(560.500, 324, 'Img', 22.500, '#fff');
  [[81, 376.500], [487, 382.500], [860.500, 382.500]].forEach(([x, y]) => {
    rect(x, y, 48, 41, '#fff', '#999');
    rect(x + 12, y + 6, 25.500, 14.500, 'none', '#999');
    path(`M${x + 8} ${y + 26}h32M${x + 14} ${y + 31}h22M${x + 18} ${y + 35.500}h12`, '#aaa', 1.200);
  });
  rect(497, 442, 28.500, 38.500, '#fff', '#999'); rect(507, 447, 8, 10.500, 'none', '#999');
  path('M503 464h19M504 472h15M507 477h12', '#aaa', 1.200);
});

const COLS = [[60.600, 79.900], [181.800, 201.800], [312.700, 331.300], [458, 477.300], [598, 618.500], [744.500, 763.800]];
const ROWS = [[110.800, 6], [166.500, 4], [253, 6], [306.500, 2], [394.500, 6]];
board(1, () => {
  header(true);
  rect(0, 82, W, 109.500, '#454345', '#666'); rect(0, 219, W, 109.500, '#454345', '#666'); rect(0, 364, W, 109, '#454345', '#666');
  text(476, 74, 'Platillos', 15.800, '#707070');
  text(476.500, 211, 'Jugos, Licuados, Cafe', 15.800, '#707070', 'middle', 158);
  text(467.500, 356, 'Postres', 15.800, '#707070', 'middle', 53);
  ROWS.forEach(([y, n]) => COLS.slice(0, n).forEach(([cx, bx]) => {
    circle(cx, y, 18);
    rect(bx, y - 13.500, 48, 28.500, '#fff', '#999');
    text(bx + 24, y - 1.500, 'Hover', 12, '#707070');
    rect(bx + 6.500, y + 6, 35, 5.500, '#fff', '#999', 0, .8);
    text(bx + 24, y + 10.700, 'Comprar', 4.800, '#555');
  }));
});

board(2, () => {
  header(true);
  const pair = (x, y) => {
    rect(x, y, 96.500, 61.500, '#000', '#888', 13);
    circle(x + 17, y + 31, 9.200); circle(x + 81.500, y + 31, 9.200);
    path(`M${x + 20} ${y + 27}v8l-6-4zM${x + 79} ${y + 27}v8l6-4z`, '#888', .8);
  };
  pair(261.500, 71); pair(787.500, 163.500); pair(261.500, 225.500);
  [[381, 79], [682.500, 170.500], [381, 234.500]].forEach(([x, y]) => rect(x, y, 92.500, 47.500, '#dbdb66', '#aeae7a'));
  rect(381, 359.500, 273.500, 97, '#bbb', '#8e8e8e'); text(512, 413, 'Google Maps', 12, '#6e6e6e', 'middle', 72);
  circle(692, 376.500, 13.300, '#bbb5b5', '#8a8a8a');
  rect(735, 384, 155, 48, '#454345', '#777');
  text(811, 400.500, 'Nos encontramos en calle', 12, '#707070', 'middle', 140);
  text(812.500, 415.500, 'vicente guerrero cerrada #30', 12, '#707070', 'middle', 154);
});

board(3, () => {
  rect(0, 0, W, 141, '#000');
  header(false, -1);
  ['Reserva', 'Lorem ipsum', 'Sfdsdf', 'Dsf'].forEach((t, i) => text(469, 70.500 + i * 8.800, t, 8.500, '#5e5e5e'));
  rect(445.500, 123, 48, 12.500, '#d7d257', '#777'); text(469.500, 132, 'Reservar', 8, '#7b7840');
  [[142.500, 178.500, 'Infantil', 97.800], [503, 178.500, 'Cumpleaños', 455], [890, 180.500, 'Reuniones', 842]].forEach(([x, y, t, b]) => {
    text(x, y, t, 8.900, '#707070');
    rect(b, 193, 96.500, 66.500, '#000', '#777');
    rect(b + 16.500, 226, 62.500, 53, '#fff', '#999');
    ['Lorem ipsum', 'Sdfsdf', 'Sdfadf'].forEach((s, i) => text(b + 47.500, 246 + i * 10.500, s, 9.600, '#707070'));
  });
  rect(84, 375, 118, 16, '#fff', '#888'); text(143, 386.500, 'Nombre', 12.200, '#707070');
  rect(84, 404.500, 118, 15.500, '#fff', '#888'); text(143, 416.500, 'Apellido', 10.300, '#707070');
  rect(84, 434.500, 118, 15.500, '#fff', '#888'); text(140, 446, 'Telefeno', 10.300, '#707070');
  rect(321.500, 333.500, 685, 152.500, '#a58481', 'none', 16);
  text(675.500, 416.500, 'Img Fondo', 12.200, '#777');
  rect(336, 375.500, 52.500, 40.500, '#fff', '#999'); text(354.500, 391.500, 'Dias', 12, '#707070');
  rect(400, 375.500, 52.500, 40.500, '#fff', '#999'); text(426.500, 391.500, 'Mes', 12, '#707070');
  rect(336, 427, 116.500, 14.500, '#fff', '#999'); text(394.500, 438, 'personas', 9.600, '#707070');
});

name(286.500, 622, 'Web – 1 Inicio', 142);
name(1330, 622, 'Web – 2 platillos', 164);
name(2373.500, 622, 'Web – 3 Nosotros', 184.500);
name(3417, 622, 'Web – 4 Reservaciones', 242);

/* overlays above the boards */
tab(1406, 477); rect(1406.500, 479, 175.500, 96, '#fff', '#3f8fe4', 0, 2.400); name(1412, 456.500, 'Pedido Por wh...', 169);
tab(3041, 564.500); rect(3041.500, 567.500, 148.500, 40, '#fff', '#3f8fe4', 0, 2.400); name(3046, 544, 'Como llega ...', 142);

/* contact links under each board */
const popups = [
  { x: 91, y: 0, hx: 136.700, clip: true },
  { x: 1198, y: 43.500, hx: 1243.700 },
  { x: 2231.500, y: 46, hx: 2277 },
  { x: 3269, y: 35, hx: 3314 }
];
const LINKS = [
  ['Pagin...', 75, 'Pagina de Facebook', 82, 92.500, 1198.500, 30, 1174, 0],
  ['What...', 71, 'Pagina de Whatasap', 82, 87, 1252.500, 27, 1228, -2],
  ['Telefo...', 80, 'Llamada al telefono', 78, 86, 1303, 26, 1278, -2]
];
popups.forEach((p, i) => {
  LINKS.forEach(([label, lw, body, bw, w, y, h, top]) => {
    if (p.clip) rect(p.x - 7, y + p.y, 7, 34, '#c2c2c2'); else tab(p.x, y + p.y - 1);
    rect(p.x, y + p.y, w, h, '#fff', '#3f8fe4', 0, 2.400);
    text(p.x + w / 2, y + p.y + 18 - (h < 28 ? 1.500 : 0), body, 9.500, '#707070', 'middle', bw);
    name(p.x + 7.500, top + p.y + 2.500, label, lw);
  });
  const sx = BX[i] + 78.500;
  LINKS.forEach((l, k) => {
    const tx = p.hx + l[8], ty = l[7] + p.y;
    if (i === 0 && k === 0) path(`M${sx} 1178C300 1178 250 1175.500 ${tx} 1175.500`);
    else elbow(sx, 1180.500 + k * 23.500, tx, ty);
    handle(tx, ty + 25.500, 'u', GREY, 'v');
    handle(sx, TOP + 510 + k * 23.500, 'd');
  });
});

/* ---- wires between the web boards ---- */
const CY = 927, HY = 671.500;
hwire(490, HY, 1290, CY);
hwire(524, 773, 1290, CY);
for (let i = 0; i < 10; i++) {
  hwire(445 + i * 85.940, 853.500, 1290, CY);
  handle(419 + i * 85.940, 853.500, 'r');
}
hwire(579, 672.500, 2333, CY);
hwire(668, 673, 3376, CY);
path('M1317 671.500C1313 671.500 1315 700 1315 760V915');
hwire(1618.500, HY, 2333, CY);
hwire(1707, HY, 3376, CY);
hwire(2755, 672.500, 3376, CY);
[[1711.500, 672], [1708, 1175], [2360, HY], [2754, 672.500], [2751, 1175], [3403, HY], [3797, 672.500], [3795, 1175.500]]
  .forEach(([x, y]) => hwire(x, y, 1325, CY));
hwire(2449, HY, 2369, CY);
hwire(3492, HY, 2369, CY);
hwire(3581, HY, 3412, CY);
hwire(1606, 527, 1636, 1050);
hwire(3049, 1053, 3016, 586);
vwire(3061.500, 981, 3115, 632);
path('M3882 741C3882 641 1494 701 1494 601');
ROWS.forEach(([y, n], r) => {
  COLS.slice(0, n).forEach(([, bx], c) => {
    if ((r === 0 && c === 5) || (r === 4 && c === 2)) return;
    const x = BX[1] + bx + 23.500, base = TOP + y + 6;
    vwire(x, base - 25, 1494, 601);
    handle(x, base, 'u');
  });
});
[[464, HY, 'r'], [553, 672.500, 'r'], [642, 673, 'r'], [498.500, 773, 'r'],
 [1342.500, HY, 'l'], [1593, HY, 'r'], [1681, HY, 'r'], [1737.500, 672, 'l'], [1733.500, 1175, 'l'],
 [2385, HY, 'l'], [2474.500, HY, 'l'], [2729, 672.500, 'r'], [2780.500, 672.500, 'l'], [2777, 1175, 'l'],
 [3428.500, HY, 'l'], [3517.500, HY, 'l'], [3607, HY, 'l'], [3823, 672.500, 'l'], [3821, 1175.500, 'l'],
 [1662, 1050, 'l'], [3023.500, 1053, 'r'], [3061.500, 1007.500, 'u'], [3882, 767.500, 'u']
].forEach(h => handle(...h));
handle(1494, 575.500, 'd', GREY, '^');
handle(1582, 527, 'r', GREY, '<');
handle(3115, 607, 'd', GREY, '^');
handle(3041.500, 586.500, 'l', GREY, '>');
joint(1290, 1325, CY, GREY); joint(2333, 2369, CY, GREY); joint(3376.500, 3412, CY, GREY);

/* ---- phone boards ---- */
const P = 276.800, PY = 1762.500;
const phones = [
  ['Inicio Cel', 94.500, 'Cuadro', 74, 'Inicio', 53.500, 'Local', 53],
  ['Platillos Cel – 2', 159, 'Cuad...', 72, 'Inicio...', 74, 'Local...', 74],
  ['Local Cel – 3', 133, 'Cuad...', 72, 'Inicio...', 74, 'Local...', 74],
  ['Reservaciones', 151, 'Cuad...', 72, 'Inicio...', 74, 'Local...', 74]
];
phones.forEach(([a, aw, b, bw, c, cw, d, dw], i) => {
  const x = 1718.500 + i * P;
  [[1500, 51], [1556.500, 34], [1591, 33], [1624, 34], [1658, 34]].forEach(([y, h]) => tab(x, y, h));
  rect(x - 1, 1499, 244, 526, '#cfcfcf');
  rect(x, 1500.500, 241.500, 522.500, '#fff', BLUE, 0, 2.200);
  tab(x + 163, 1499.500);
  rect(x + 164.500, 1500.500, 77, 24.500, '#fff', BLUE, 0, 2.200);
  rect(x, 1519, 82, 160, '#fff', BLUE, 0, 2.200);
  name(x + 6, 1478.500, a, aw); name(x + 6, 1498, b, bw); name(x + 170, 1478.500, 'Men...', 63);
  name(x + 6, 1535.500, c, cw); name(x + 6, 1570, 'Platill...', 76);
  name(x + 6, 1604, d, dw); name(x + 6, 1638, 'Reser...', 75);
  path([1559, 1579, 1593, 1613, 1627, 1647, 1661].map(y => `M${x} ${y}h82`).join(''), BLUE, 2.200);
});
name(2725, 1478.500, '– 4', 31.500);
const px = i => 1718.500 + i * P;
const bl = (x0, y0, x1, y1) => hwire(x0, y0, x1, y1, BLUE, 8);
const steep = (x0, y0, x1, y1) => path(`M${x0} ${y0}C${x0 + 105} ${y0} ${x1 - 105} ${y1} ${x1} ${y1}`, BLUE, 8);
const hook = (i, y) => path(`M${px(i)} ${PY}C${px(i) + 62} ${PY} ${px(i) + 22} ${y} ${px(i) + 86} ${y}`, BLUE, 8);
hook(0, 1529); hook(1, 1563); hook(2, 1597); hook(3, 1630);
steep(1826, 1562.500, 1960, PY); bl(1826, 1598, 2237, PY); bl(1826, 1629.500, 2514, PY);
for (let i = 0; i < 4; i++) { bl(1858 + i * P, 1553, 1824, 1598); handle(1882.500 + i * P, 1553, 'l', BLUE); }
steep(2102, 1597, 2237, PY); bl(2102, 1629.500, 2514, PY); steep(2379, 1629.500, 2514, PY);
bl(2247, 1609, 1995, PY); bl(2524, 1609, 1995, PY); bl(2524, 1643, 2272, PY);
path('M1974 1609C1975 1650 1978 1700 1981 1755M2251 1643C2252 1680 2254 1720 2257 1755M2528 1677C2530 1700 2532 1730 2534 1755', BLUE, 8);
[[0, 1529], [0, 1562.500], [0, 1629.500], [1, 1562.500], [1, 1597], [1, 1629.500], [2, 1597], [2, 1629.500], [3, 1629.500]]
  .forEach(([i, y]) => handle(px(i) + 81.500, y, 'r', BLUE));
[[1, 1609], [2, 1609], [2, 1643], [3, 1609], [3, 1643], [3, 1677]].forEach(([i, y]) => handle(px(i), y, 'l', BLUE));
handle(px(0) + 81.500, 1598, 'r', BLUE, '<');
handle(px(0), PY, 'l', BLUE, '>');
path(`M${px(0) - 14} ${PY}H${px(0)}`, BLUE, 7);
for (let i = 1; i < 4; i++) joint(px(i) - 35.500, px(i), PY, BLUE);

document.getElementById('canvas').innerHTML = out.join('');
```
